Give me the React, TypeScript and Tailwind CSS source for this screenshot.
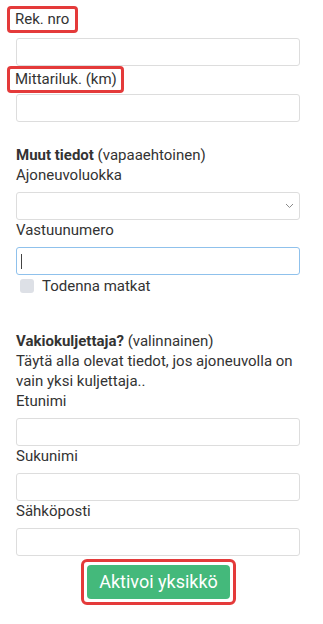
import React from 'react'

const Field = ({ label, focused = false }: { label: string; focused?: boolean }) => (
  <div className="flex flex-col">
    <div className="pl-[16px] leading-[20px] mb-[7px]">{label}</div>
    <div
      className={`relative ml-[16px] w-[284px] h-[28px] rounded-[3px] border bg-white ${
        focused ? 'border-[#8fc1ec]' : 'border-[#dddddd]'
      }`}
    >
      {focused && <div className="absolute left-[4px] top-[6px] w-[1px] h-[15px] bg-[#444]" />}
    </div>
  </div>
)

const App = () => {
  return (
    <div
      className="w-[323px] min-h-[624px] bg-white text-[15px] text-[#333333] pt-[6px]"
      style={{ fontFamily: 'Roboto, "Noto Sans", sans-serif' }}
    >
      <div className="ml-[7px] inline-block h-[27px] border-[3px] border-[#e43a3a] rounded-[4px] pl-[5px] pr-[6px] leading-[20px]">
        Rek. nro
      </div>
      <div className="ml-[16px] mt-[5px] w-[284px] h-[28px] rounded-[3px] border border-[#dddddd]" />

      <div className="ml-[7px] inline-block h-[27px] border-[3px] border-[#e43a3a] rounded-[4px] pl-[5px] pr-[4px] leading-[20px]">
        Mittariluk. (km)
      </div>
      <div className="ml-[16px] mt-[1px] w-[284px] h-[28px] rounded-[3px] border border-[#dddddd]" />

      <div className="mt-[23px] pl-[16px] leading-[20px]">
        <span className="font-bold">Muut tiedot</span> (vapaaehtoinen)
      </div>
      <div className="pl-[16px] leading-[20px] mb-[7px]">Ajoneuvoluokka</div>
      <div className="ml-[16px] w-[284px] h-[28px] rounded-[3px] border border-[#dddddd] flex items-center justify-end pr-[5px]">
        <svg width="9" height="6" viewBox="0 0 9 6" fill="none">
          <path d="M1 1l3.5 3.5L8 1" stroke="#8a8a8a" strokeWidth="1" />
        </svg>
      </div>
      <Field label="Vastuunumero" focused />
      <div className="flex items-center h-[22px] pl-[20px] gap-[8px]">
        <div className="w-[14px] h-[14px] rounded-[3px] bg-[#dde0e6]" />
        <span className="leading-[20px]">Todenna matkat</span>
      </div>

      <div className="mt-[34px] pl-[16px] pr-[20px] leading-[20px]">
        <div>
          <span className="font-bold">Vakiokuljettaja?</span> (valinnainen)
        </div>
        <div>Täytä alla olevat tiedot, jos ajoneuvolla on vain yksi kuljettaja..</div>
      </div>
      <Field label="Etunimi" />
      <Field label="Sukunimi" />
      <Field label="Sähköposti" />

      <div className="flex justify-center mt-[3px] pr-[6px]">
        <div className="border-[3px] border-[#e43a3a] rounded-[6px] p-[3px]">
          <button className="h-[34px] px-[12px] rounded-[4px] bg-[#44b97b] text-white text-[18px] leading-[34px]">
            Aktivoi yksikkö
          </button>
        </div>
      </div>
    </div>
  )
}

export default App
